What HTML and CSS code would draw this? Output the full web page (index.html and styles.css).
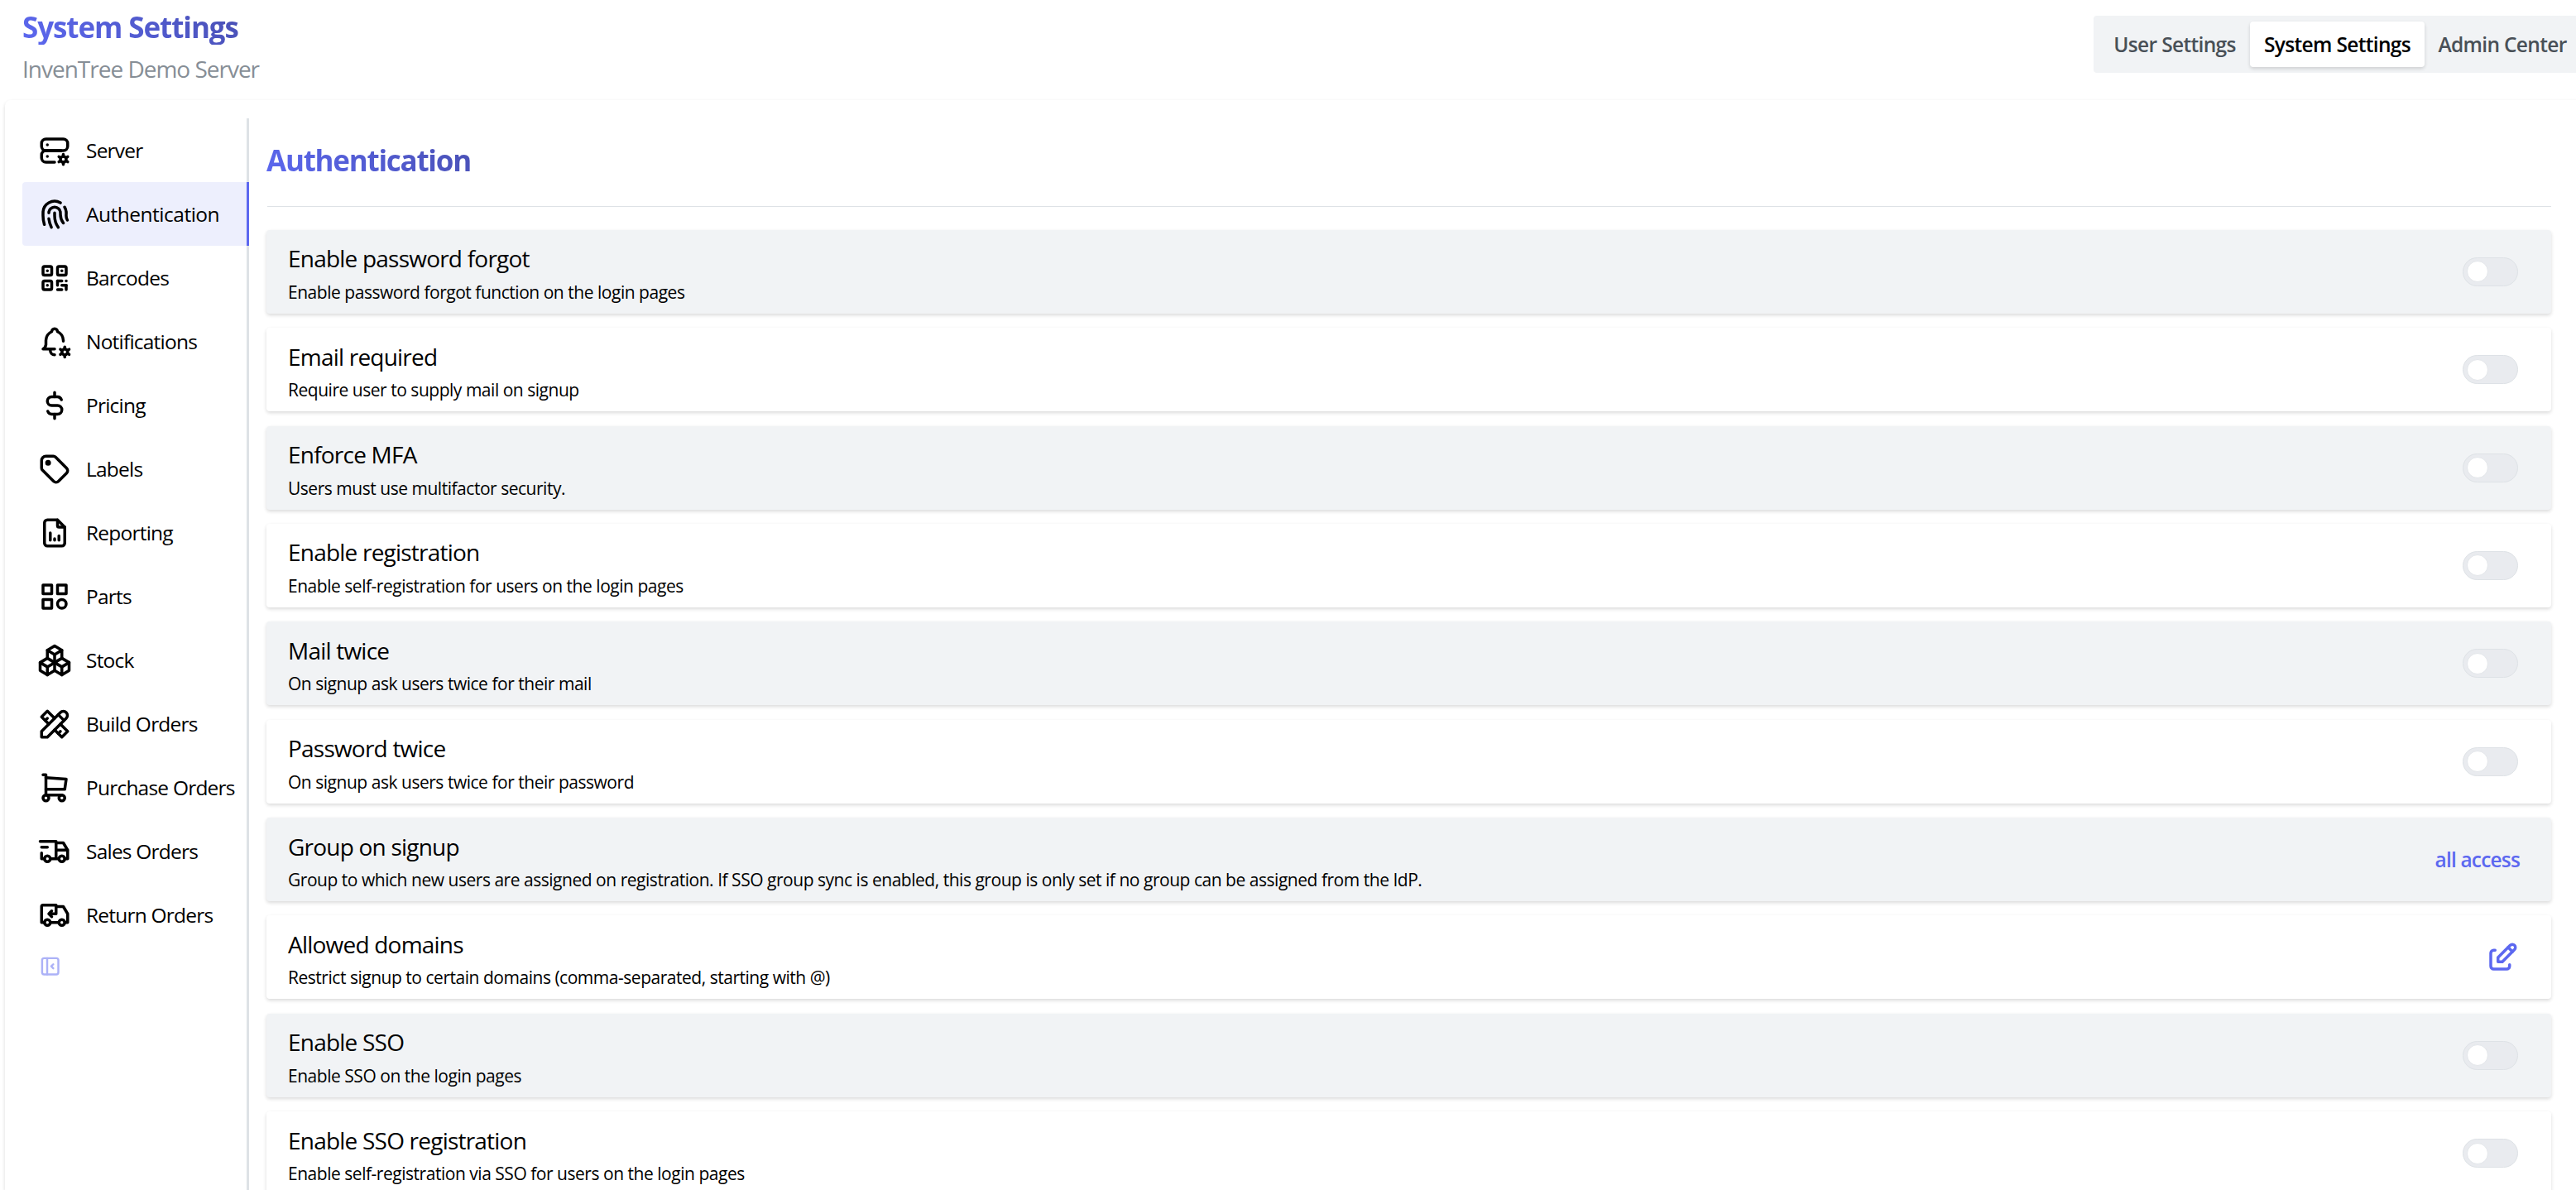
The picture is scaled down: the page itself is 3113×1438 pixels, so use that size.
FILE: index.html
```
<!DOCTYPE html>
<html lang="en">
<head>
    <meta charset="UTF-8">
    <title>InvenTree Demo Server | System Settings</title>
    <link rel="stylesheet" href="styles.css">
</head>
<body>
    <header class="page-header">
        <div>
            <h1 class="gradient-title">System Settings</h1>
            <p class="subtitle">InvenTree Demo Server</p>
        </div>
        <div class="segmented">
            <button class="segment segment-user">User Settings</button>
            <button class="segment segment-system active">System Settings</button>
            <button class="segment segment-admin">Admin Center</button>
        </div>
    </header>

    <main class="panel">
        <nav class="sidebar">
            <a class="tab">
                <svg class="icon" viewBox="0 0 24 24"><path d="M3 4m0 3a3 3 0 0 1 3 -3h12a3 3 0 0 1 3 3v2a3 3 0 0 1 -3 3h-12a3 3 0 0 1 -3 -3z"/><path d="M12 20h-6a3 3 0 0 1 -3 -3v-2a3 3 0 0 1 3 -3h10.5"/><path d="M18 18m-2 0a2 2 0 1 0 4 0a2 2 0 1 0 -4 0"/><path d="M18 14.5v1.5"/><path d="M18 20v1.5"/><path d="M21.032 16.25l-1.299 .75"/><path d="M16.27 19l-1.3 .75"/><path d="M14.97 16.25l1.3 .75"/><path d="M19.733 19l1.3 .75"/><path d="M7 8v.01"/><path d="M7 16v.01"/></svg>
                <span>Server</span>
            </a>
            <a class="tab active">
                <svg class="icon" viewBox="0 0 24 24"><path d="M18.9 7a8 8 0 0 1 1.1 5v1a6 6 0 0 0 .8 3"/><path d="M8 11a4 4 0 0 1 8 0v1a10 10 0 0 0 2 6"/><path d="M12 11v2a14 14 0 0 0 2.5 8"/><path d="M8 15a18 18 0 0 0 1.8 6"/><path d="M4.9 19a22 22 0 0 1 -.9 -7v-1a8 8 0 0 1 12 -6.95"/></svg>
                <span>Authentication</span>
            </a>
            <a class="tab">
                <svg class="icon" viewBox="0 0 24 24"><path d="M4 4m0 1a1 1 0 0 1 1 -1h4a1 1 0 0 1 1 1v4a1 1 0 0 1 -1 1h-4a1 1 0 0 1 -1 -1z"/><path d="M7 17l0 .01"/><path d="M14 4m0 1a1 1 0 0 1 1 -1h4a1 1 0 0 1 1 1v4a1 1 0 0 1 -1 1h-4a1 1 0 0 1 -1 -1z"/><path d="M7 7l0 .01"/><path d="M4 14m0 1a1 1 0 0 1 1 -1h4a1 1 0 0 1 1 1v4a1 1 0 0 1 -1 1h-4a1 1 0 0 1 -1 -1z"/><path d="M17 7l0 .01"/><path d="M14 14l3 0"/><path d="M20 14l0 .01"/><path d="M14 14l0 3"/><path d="M14 20l3 0"/><path d="M17 17l3 0"/><path d="M20 17l0 3"/></svg>
                <span>Barcodes</span>
            </a>
            <a class="tab">
                <svg class="icon" viewBox="0 0 24 24"><path d="M12 17h-8a4 4 0 0 0 2 -3v-3a7 7 0 0 1 4 -6a2 2 0 1 1 4 0a7 7 0 0 1 4 6v.5"/><path d="M9 17v1a3 3 0 0 0 3 3"/><path d="M19.001 19m-2 0a2 2 0 1 0 4 0a2 2 0 1 0 -4 0"/><path d="M19.001 15.5v1.5"/><path d="M19.001 21v1.5"/><path d="M22.032 17.25l-1.299 .75"/><path d="M17.27 20l-1.3 .75"/><path d="M15.97 17.25l1.3 .75"/><path d="M20.733 20l1.3 .75"/></svg>
                <span>Notifications</span>
            </a>
            <a class="tab">
                <svg class="icon" viewBox="0 0 24 24"><path d="M16.7 8a3 3 0 0 0 -2.7 -2h-4a3 3 0 0 0 0 6h4a3 3 0 0 1 0 6h-4a3 3 0 0 1 -2.7 -2"/><path d="M12 3v3m0 12v3"/></svg>
                <span>Pricing</span>
            </a>
            <a class="tab">
                <svg class="icon" viewBox="0 0 24 24"><path d="M7.5 7.5m-1 0a1 1 0 1 0 2 0a1 1 0 1 0 -2 0"/><path d="M3 6v5.172a2 2 0 0 0 .586 1.414l7.71 7.71a2.41 2.41 0 0 0 3.408 0l5.592 -5.592a2.41 2.41 0 0 0 0 -3.408l-7.71 -7.71a2 2 0 0 0 -1.414 -.586h-5.172a3 3 0 0 0 -3 3z"/></svg>
                <span>Labels</span>
            </a>
            <a class="tab">
                <svg class="icon" viewBox="0 0 24 24"><path d="M14 3v4a1 1 0 0 0 1 1h4"/><path d="M17 21h-10a2 2 0 0 1 -2 -2v-14a2 2 0 0 1 2 -2h7l5 5v11a2 2 0 0 1 -2 2z"/><path d="M9 17l0 -5"/><path d="M12 17l0 -1"/><path d="M15 17l0 -3"/></svg>
                <span>Reporting</span>
            </a>
            <a class="tab">
                <svg class="icon" viewBox="0 0 24 24"><path d="M4 4h6v6h-6z"/><path d="M14 4h6v6h-6z"/><path d="M4 14h6v6h-6z"/><path d="M17 17m-3 0a3 3 0 1 0 6 0a3 3 0 1 0 -6 0"/></svg>
                <span>Parts</span>
            </a>
            <a class="tab">
                <svg class="icon" viewBox="0 0 24 24"><path d="M7 16.5l-5 -3l5 -3l5 3v5.5l-5 3z"/><path d="M2 13.5v5.5l5 3"/><path d="M7 16.545l5 -3.03"/><path d="M17 16.5l-5 -3l5 -3l5 3v5.5l-5 3z"/><path d="M12 19l5 3"/><path d="M17 16.5l5 -3"/><path d="M12 13.5v-5.5l-5 -3l5 -3l5 3v5.5"/><path d="M7 5.03v5.455"/><path d="M12 8l5 -3"/></svg>
                <span>Stock</span>
            </a>
            <a class="tab">
                <svg class="icon" viewBox="0 0 24 24"><path d="M3 21h4l13 -13a1.5 1.5 0 0 0 -4 -4l-13 13v4"/><path d="M14.5 5.5l4 4"/><path d="M12 8l-5 -5l-4 4l5 5"/><path d="M7 8l-1.5 1.5"/><path d="M16 12l5 5l-4 4l-5 -5"/><path d="M16 17l-1.5 1.5"/></svg>
                <span>Build Orders</span>
            </a>
            <a class="tab">
                <svg class="icon" viewBox="0 0 24 24"><path d="M6 19m-2 0a2 2 0 1 0 4 0a2 2 0 1 0 -4 0"/><path d="M17 19m-2 0a2 2 0 1 0 4 0a2 2 0 1 0 -4 0"/><path d="M17 17h-11v-14h-2"/><path d="M6 5l14 1l-1 7h-13"/></svg>
                <span>Purchase Orders</span>
            </a>
            <a class="tab">
                <svg class="icon" viewBox="0 0 24 24"><path d="M7 17m-2 0a2 2 0 1 0 4 0a2 2 0 1 0 -4 0"/><path d="M17 17m-2 0a2 2 0 1 0 4 0a2 2 0 1 0 -4 0"/><path d="M5 17h-2v-4m-1 -8h11v12m-4 0h6m4 0h2v-6h-8m0 -5h5l3 5"/><path d="M3 9l4 0"/></svg>
                <span>Sales Orders</span>
            </a>
            <a class="tab">
                <svg class="icon" viewBox="0 0 24 24"><path d="M7 17m-2 0a2 2 0 1 0 4 0a2 2 0 1 0 -4 0"/><path d="M17 17m-2 0a2 2 0 1 0 4 0a2 2 0 1 0 -4 0"/><path d="M5 17h-2v-11a1 1 0 0 1 1 -1h9v6h-5l2 2m0 -4l-2 2"/><path d="M9 17l6 0"/><path d="M13 6h5l3 5v6h-2"/></svg>
                <span>Return Orders</span>
            </a>
            <button class="collapse" aria-label="Collapse sidebar">
                <svg class="icon" viewBox="0 0 24 24"><path d="M4 4m0 2a2 2 0 0 1 2 -2h12a2 2 0 0 1 2 2v12a2 2 0 0 1 -2 2h-12a2 2 0 0 1 -2 -2z"/><path d="M9 4v16"/><path d="M15 10l-2 2l2 2"/></svg>
            </button>
        </nav>

        <section class="content">
            <h2 class="gradient-title">Authentication</h2>
            <hr class="divider">

            <div class="settings">
                <div class="setting">
                    <div class="setting-text">
                        <div class="setting-name">Enable password forgot</div>
                        <div class="setting-description">Enable password forgot function on the login pages</div>
                    </div>
                    <span class="switch"></span>
                </div>
                <div class="setting">
                    <div class="setting-text">
                        <div class="setting-name">Email required</div>
                        <div class="setting-description">Require user to supply mail on signup</div>
                    </div>
                    <span class="switch"></span>
                </div>
                <div class="setting">
                    <div class="setting-text">
                        <div class="setting-name">Enforce MFA</div>
                        <div class="setting-description">Users must use multifactor security.</div>
                    </div>
                    <span class="switch"></span>
                </div>
                <div class="setting">
                    <div class="setting-text">
                        <div class="setting-name">Enable registration</div>
                        <div class="setting-description">Enable self-registration for users on the login pages</div>
                    </div>
                    <span class="switch"></span>
                </div>
                <div class="setting">
                    <div class="setting-text">
                        <div class="setting-name">Mail twice</div>
                        <div class="setting-description">On signup ask users twice for their mail</div>
                    </div>
                    <span class="switch"></span>
                </div>
                <div class="setting">
                    <div class="setting-text">
                        <div class="setting-name">Password twice</div>
                        <div class="setting-description">On signup ask users twice for their password</div>
                    </div>
                    <span class="switch"></span>
                </div>
                <div class="setting">
                    <div class="setting-text">
                        <div class="setting-name">Group on signup</div>
                        <div class="setting-description">Group to which new users are assigned on registration. If SSO group sync is enabled, this group is only set if no group can be assigned from the IdP.</div>
                    </div>
                    <button class="value-button">all access</button>
                </div>
                <div class="setting">
                    <div class="setting-text">
                        <div class="setting-name">Allowed domains</div>
                        <div class="setting-description">Restrict signup to certain domains (comma-separated, starting with @)</div>
                    </div>
                    <button class="edit-button" aria-label="Edit">
                        <svg class="icon" viewBox="0 0 24 24"><path d="M7 7h-1a2 2 0 0 0 -2 2v9a2 2 0 0 0 2 2h9a2 2 0 0 0 2 -2v-1"/><path d="M20.385 6.585a2.1 2.1 0 0 0 -2.97 -2.97l-8.415 8.385v3h3l8.385 -8.415z"/><path d="M16 5l3 3"/></svg>
                    </button>
                </div>
                <div class="setting">
                    <div class="setting-text">
                        <div class="setting-name">Enable SSO</div>
                        <div class="setting-description">Enable SSO on the login pages</div>
                    </div>
                    <span class="switch"></span>
                </div>
                <div class="setting">
                    <div class="setting-text">
                        <div class="setting-name">Enable SSO registration</div>
                        <div class="setting-description">Enable self-registration via SSO for users on the login pages</div>
                    </div>
                    <span class="switch"></span>
                </div>
            </div>
        </section>
    </main>
</body>
</html>
```
FILE: styles.css
```
* {
    box-sizing: border-box;
    margin: 0;
    padding: 0;
}

html {
    font-size: 28px;
}

body {
    height: 100vh;
    overflow: hidden;
    display: flex;
    flex-direction: column;
    font-family: "Segoe UI", "Open Sans", sans-serif;
    line-height: 1.55;
    letter-spacing: -0.028em;
    background-color: #fff;
    color: #000;
}

button {
    font: inherit;
    letter-spacing: inherit;
    border: none;
    background: none;
    cursor: pointer;
}

.icon {
    display: block;
    flex-shrink: 0;
    width: 42px;
    height: 42px;
    fill: none;
    stroke: currentColor;
    stroke-width: 2;
    stroke-linecap: round;
    stroke-linejoin: round;
}

.gradient-title {
    width: fit-content;
    font-size: 35px;
    font-weight: 700;
    line-height: 42px;
    letter-spacing: -0.031em;
    background-image: linear-gradient(45deg, #5c68f0 0%, #4950b4 100%);
    background-clip: text;
    -webkit-background-clip: text;
    color: transparent;
}

/* Header */
.page-header {
    display: flex;
    flex-shrink: 0;
    justify-content: space-between;
    align-items: flex-start;
    height: 121px;
    padding: 12px 0 0 27px;
}

.subtitle {
    margin-top: 8px;
    letter-spacing: -0.036em;
    color: #868e96;
}

.segmented {
    display: flex;
    margin-top: 7px;
    margin-right: -12px;
    padding: 7px;
    border-radius: 4px;
    background-color: #f1f3f5;
}

.segment {
    height: 55px;
    font-size: 24.5px;
    font-weight: 600;
    letter-spacing: -0.027em;
    border-radius: 4px;
    white-space: nowrap;
    color: #495057;
}

.segment-user {
    width: 182px;
}

.segment-system {
    width: 211px;
}

.segment-admin {
    width: 188px;
}

.segment.active {
    background-color: #fff;
    color: #000;
    box-shadow: 0 2px 5px rgba(0, 0, 0, 0.05), 0 2px 4px rgba(0, 0, 0, 0.1);
}

/* Main panel */
.panel {
    display: flex;
    flex: 1;
    min-height: 0;
    margin-left: 6px;
    margin-right: -12px;
    padding: 22px 42px 0 21px;
    border-radius: 7px 7px 0 0;
    box-shadow: 0 2px 5px rgba(0, 0, 0, 0.05), 0 2px 4px rgba(0, 0, 0, 0.1);
}

.sidebar {
    flex-shrink: 0;
    width: 274px;
    border-right: 3px solid #dee2e6;
}

.tab {
    display: flex;
    align-items: center;
    gap: 17.5px;
    height: 77px;
    margin-right: -3px;
    padding-left: 17.5px;
    font-size: 24.5px;
    white-space: nowrap;
    border-right: 3px solid transparent;
    border-radius: 4px 0 0 4px;
}

.tab.active {
    background-color: #edeffd;
    border-right-color: #5c68f0;
    letter-spacing: -0.02em;
}

.collapse {
    padding: 9px 19px;
    color: #5c68f0;
    opacity: 0.5;
}

.collapse .icon {
    width: 29.4px;
    height: 29.4px;
}

/* Settings list */
.content {
    flex-grow: 1;
    padding: 30px 0 0 21px;
}

.content .gradient-title {
    letter-spacing: -0.036em;
}

.divider {
    margin: 34px 0 28px 1px;
    border: none;
    border-top: 1px solid #dee2e6;
}

.settings {
    display: flex;
    flex-direction: column;
    gap: 17.5px;
}

.setting {
    display: flex;
    flex-shrink: 0;
    align-items: center;
    justify-content: space-between;
    height: 100.85px;
    padding: 0 38px 0 26px;
    border-radius: 4px;
    background-color: #fff;
    box-shadow: 0 2px 5px rgba(0, 0, 0, 0.05), 0 2px 4px rgba(0, 0, 0, 0.1);
}

.setting:nth-child(odd) {
    background-color: #f1f3f5;
}

.setting-text {
    padding-top: 4px;
}

.setting-name {
    font-size: 28px;
}

.setting-description {
    margin-top: 2px;
    font-size: 21px;
    letter-spacing: -0.0225em;
}

.switch {
    display: flex;
    align-items: center;
    width: 67px;
    height: 35px;
    margin-right: 2px;
    padding-left: 4px;
    border: 1px solid #dee2e6;
    border-radius: 35px;
    background-color: #e9ebef;
}

.switch::before {
    content: "";
    width: 24px;
    height: 24px;
    border: 1px solid #e3e6ea;
    border-radius: 50%;
    background-color: #fff;
}

.value-button {
    font-size: 24.5px;
    font-weight: 600;
    letter-spacing: -0.034em;
    color: #5c68f0;
}

.edit-button {
    color: #5c68f0;
}
```
